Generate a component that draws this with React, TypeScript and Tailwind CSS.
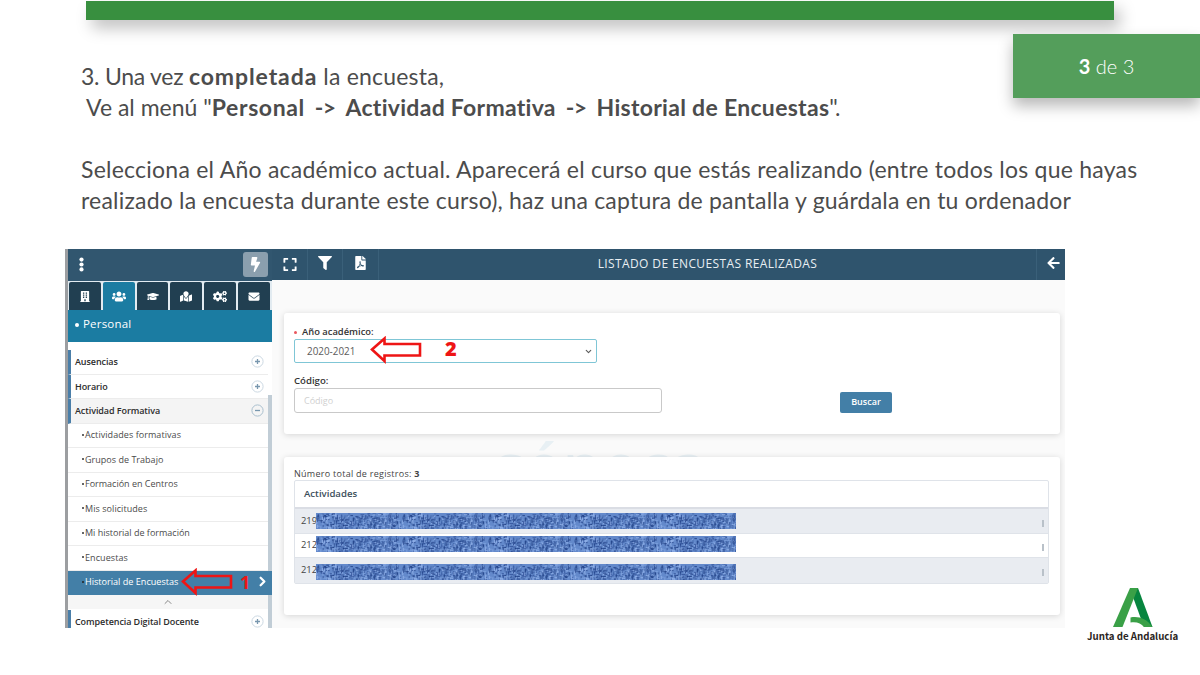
import {
  FaArrowLeft,
  FaBolt,
  FaBuilding,
  FaCogs,
  FaEnvelope,
  FaExpand,
  FaFilePdf,
  FaFilter,
  FaGraduationCap,
  FaMapMarked,
  FaUsers,
} from 'react-icons/fa'
import { ChevronDown, ChevronRight, ChevronUp } from 'lucide-react'

const tabs = [FaBuilding, FaUsers, FaGraduationCap, FaMapMarked, FaCogs, FaEnvelope]

const submenu = [
  { label: 'Actividades formativas', tracking: 'tracking-[0.06px]' },
  { label: 'Grupos de Trabajo', tracking: 'tracking-[0.02px]' },
  { label: 'Formación en Centros', tracking: 'tracking-[0px]' },
  { label: 'Mis solicitudes', tracking: 'tracking-[0.06px]' },
  { label: 'Mi historial de formación', tracking: 'tracking-[0px]' },
  { label: 'Encuestas', tracking: 'tracking-[0.08px]' },
]

const rows = [
  { code: '219', style: 'h-[25px] bg-[#e9ecf1]', bar: 'mt-0' },
  { code: '212', style: 'h-[24px] bg-white', bar: '-mt-[3px]' },
  { code: '212', style: 'h-[25px] bg-[#e9ecf1]', bar: 'mt-[2px]' },
]

// fixed seed so that the three bars share one texture
function makeSpecks() {
  const colors = ['#1f3f85', '#2d4f96', '#4268ac', '#7ea2de', '#94b4ec', '#3a5c9f']
  const specks = []
  let seed = 17
  const next = () => {
    seed = (seed * 16807) % 2147483647
    return seed / 2147483647
  }
  for (let i = 0; i < 420; i++) {
    const tall = next() > 0.5
    specks.push({
      x: next() * 84,
      y: next() * 15,
      w: tall ? 1.2 : 1 + next() * 3,
      h: tall ? 1 + next() * 4 : 1.2,
      fill: colors[Math.floor(next() * colors.length)],
    })
  }
  return specks
}

const specks = makeSpecks()

function Redacted({ id }: { id: string }) {
  return (
    <svg width="420" height="16" className="block">
      <defs>
        <pattern id={id} width="86" height="16" patternUnits="userSpaceOnUse">
          <rect width="86" height="16" fill="#6389cb" />
          {specks.map((s, i) => (
            <rect key={i} x={s.x} y={s.y} width={s.w} height={s.h} fill={s.fill} opacity="0.75" />
          ))}
        </pattern>
      </defs>
      <rect width="420" height="16" fill={`url(#${id})`} />
    </svg>
  )
}

function RedArrow() {
  return (
    <svg width="52" height="28" viewBox="0 0 52 28" fill="none" stroke="#ee1515" strokeWidth="2.6">
      <path d="M2 13.5 L14.5 2.5 V8 H50 V19.5 H14.5 V25 Z" />
    </svg>
  )
}

function Toggle({ open }: { open?: boolean }) {
  return (
    <svg width="13" height="13" viewBox="0 0 13 13" fill="none">
      <circle cx="6.5" cy="6.5" r="5.6" stroke={open ? '#a9bfce' : '#cbd8e2'} />
      <path d={open ? 'M4 6.5h5' : 'M4 6.5h5M6.5 4v5'} stroke="#7897ae" strokeWidth="1.3" />
    </svg>
  )
}

function Section({ label, open }: { label: string; open?: boolean }) {
  return (
    <div
      className={`flex h-[24.5px] shrink-0 items-center justify-between border-b border-l-[3px] border-b-[#ececec] border-l-[#4a7ea8] pl-1 pr-1 ${
        open ? 'bg-[#f4f4f4]' : 'bg-white'
      }`}
    >
      <span className="whitespace-nowrap text-[9px] font-semibold tracking-[-0.08px] text-[#2c2c2c]">{label}</span>
      <Toggle open={open} />
    </div>
  )
}

function Sidebar() {
  return (
    <aside className="flex w-[207px] shrink-0 flex-col border-l-[3px] border-[#9c9ea1] bg-white">
      <div className="flex h-[32px] shrink-0 items-center justify-between bg-[#31566f] pb-[2px] pl-[11px] pr-1">
        <svg width="5" height="15" fill="#fff">
          <circle cx="2.5" cy="2.6" r="2.1" />
          <circle cx="2.5" cy="7.5" r="2.1" />
          <circle cx="2.5" cy="12.4" r="2.1" />
        </svg>
        <div className="flex h-[25px] w-[25px] items-center justify-center rounded-[3px] bg-[#8b9fae]">
          <FaBolt className="h-[15px] w-[11px] text-white" />
        </div>
      </div>
      <div className="flex h-[29px] shrink-0 gap-[2px] bg-[#e2ebf1] pl-px pr-[2px] pt-px">
        {tabs.map((Icon, i) => (
          <div
            key={i}
            className={`flex flex-1 items-center justify-center rounded-t-[2px] ${i === 1 ? 'bg-[#1b7ca2]' : 'bg-[#213f51]'}`}
          >
            <Icon className={i === 1 || i === 4 ? 'h-[13px] w-[14px] text-white' : 'h-[11px] w-[12px] text-white'} />
          </div>
        ))}
      </div>
      <div className="flex h-[32px] shrink-0 items-start gap-1 bg-[#1b7ca2] pl-[7px] pt-[5px] text-white">
        <span className="mt-[8px] h-1 w-1 rounded-full bg-white" />
        <span className="text-[11.5px] leading-[17px] tracking-[0.2px]">Personal</span>
      </div>
      <div className="flex min-h-0 flex-1 pt-2">
        <div className="flex w-[200px] flex-col">
          <Section label="Ausencias" />
          <Section label="Horario" />
          <Section label="Actividad Formativa" open />
          {submenu.map((item) => (
            <div key={item.label} className="flex h-[24.5px] shrink-0 items-center gap-px border-b border-[#ececec] pb-px pl-[14px]">
              <span className="h-[2px] w-[2px] rounded-full bg-[#333]" />
              <span className={`whitespace-nowrap text-[9px] text-[#4b4b4b] ${item.tracking}`}>{item.label}</span>
            </div>
          ))}
          <div className="relative z-10 flex h-[24px] w-[204px] shrink-0 items-center gap-px bg-[#437fa7] pb-[2px] pl-[14px] text-white">
            <span className="h-[2px] w-[2px] shrink-0 rounded-full bg-[#222]" />
            <span className="w-[95px] shrink-0 whitespace-nowrap text-[9.1px] font-medium">Historial de Encuestas</span>
            <div className="shrink-0">
              <RedArrow />
            </div>
            <span className="ml-[6px] text-[18px] font-bold leading-none text-[#ee1515]">1</span>
            <ChevronRight className="ml-[4px] h-[15px] w-[15px] shrink-0" strokeWidth={3.6} />
          </div>
          <div className="flex h-[14px] shrink-0 items-center justify-center bg-[#f6f6f6]">
            <ChevronUp className="h-[12px] w-[12px] text-[#888]" strokeWidth={2} />
          </div>
          <div className="pt-px">
            <Section label="Competencia Digital Docente" />
          </div>
        </div>
        <div className="mt-[45px] w-[4px] bg-[#c1cdd6]" />
      </div>
    </aside>
  )
}

function Toolbar() {
  return (
    <div className="flex h-[31px] shrink-0 items-stretch bg-[#2f546d] text-white">
      <div className="flex w-[36px] items-center justify-center border-r border-[#3a6079]">
        <FaExpand className="h-[15px] w-[14px]" />
      </div>
      <div className="flex w-[35px] items-center justify-center border-r border-[#3a6079]">
        <FaFilter className="mb-[4px] h-[14px] w-[14px]" />
      </div>
      <div className="flex w-[36px] items-center justify-center border-r border-[#3a6079]">
        <FaFilePdf className="mb-[4px] h-[14px] w-[11px]" />
      </div>
      <div className="flex flex-1 items-center justify-center whitespace-nowrap pb-px text-[12px] font-medium tracking-[0.38px] text-[#e9eff3]">
        LISTADO DE ENCUESTAS REALIZADAS
      </div>
      <div className="flex w-[29px] items-center justify-center border-l border-[#3a6079] pl-1">
        <FaArrowLeft className="mb-[4px] h-[14px] w-[13px]" />
      </div>
    </div>
  )
}

function SearchCard() {
  return (
    <section className="relative h-[121px] shrink-0 rounded-[3px] bg-white px-[10px] pt-3 text-[9px] shadow-[0_1px_6px_rgba(0,0,0,0.15)]">
      <label className="flex h-[14px] items-center gap-[5px] text-[9.4px] font-semibold text-[#333]">
        <span className="h-[3px] w-[3px] rounded-full bg-[#e9565d]" />
        Año académico:
      </label>
      <div className="flex h-[24px] w-[303px] items-center rounded-[2px] border border-[#7fc6d6] pl-3 pr-[3px] text-[#5c5c5c]">
        <span className="w-[49px] whitespace-nowrap text-[9.9px]">2020-2021</span>
        <div className="-mt-[2px] ml-[14px]">
          <RedArrow />
        </div>
        <span className="-mt-1 ml-[23px] text-[20px] font-extrabold leading-none text-[#ee1515]">2</span>
        <ChevronDown className="ml-auto h-[9px] w-[9px]" strokeWidth={3} />
      </div>
      <div className="flex items-end">
        <div className="w-[368px] pt-[12px]">
          <label className="flex h-[13px] items-center text-[9.6px] font-semibold text-[#333]">Código:</label>
          <div className="flex h-[25px] items-center rounded-[3px] border border-[#c9c9c9] pl-[9px] text-[#d0d0d0]">Código</div>
        </div>
        <button className="ml-[178px] h-[21px] w-[52px] rounded-[2px] bg-[#437fa7] pb-px text-[9px] font-semibold text-white">
          Buscar
        </button>
      </div>
    </section>
  )
}

function ResultsCard() {
  return (
    <section className="relative mt-[23px] h-[158px] shrink-0 rounded-[3px] bg-white pl-[10px] pr-[11px] pt-[10px] text-[9px] text-[#444] shadow-[0_1px_6px_rgba(0,0,0,0.15)]">
      <div className="h-[13px] whitespace-nowrap leading-[13px] tracking-[0.27px]">
        Número total de registros: <b>3</b>
      </div>
      <div className="rounded-[2px] border border-[#dfe3e9]">
        <div className="flex h-[28px] items-center border-b-2 border-[#dadde4] pl-[9px] text-[9.6px] font-semibold text-[#3b4e5a]">
          Actividades
        </div>
        {rows.map((row, i) => (
          <div key={i} className={`flex items-center border-b border-[#dfe3e9] pl-[6px] pr-1 last:border-b-0 ${row.style}`}>
            <span className="w-[15px] text-[9.4px]">{row.code}</span>
            <div className={`relative ${row.bar}`}>
              <Redacted id={`noise-${i}`} />
            </div>
            <span className="ml-auto mt-1 h-[7px] w-[2px] bg-[#b9c1c9]" />
          </div>
        ))}
      </div>
    </section>
  )
}

function Logo() {
  return (
    <div className="flex flex-col items-center">
      <svg width="40" height="40" viewBox="0 0 40 40">
        <path d="M17 0 H25 L39.5 39 H31 L17 1 Z" fill="#07853f" />
        <path d="M17 0 H25 L9.5 39 H0 Z" fill="#3aa047" />
        <path d="M17.5 29.5 C25 28 33 30 39.5 39 H31 C28 35 23.5 33.6 17.5 34.5 Z" fill="#3aa047" />
      </svg>
      <span className="mt-[2px] whitespace-nowrap font-['Noto_Sans_CJK_SC',sans-serif] text-[9.7px] font-bold leading-[13px] text-[#2b2523]">
        Junta de Andalucía
      </span>
    </div>
  )
}

export default function App() {
  return (
    <div className="relative flex h-[675px] w-[1200px] flex-col overflow-hidden bg-white font-['Open_Sans','Noto_Sans',sans-serif]">
      <div className="ml-[86px] mt-px h-[19px] w-[1028px] shrink-0 bg-[#388f3f] shadow-[6px_8px_16px_rgba(0,0,0,0.25)]" />

      <div className="absolute right-0 top-[34px] flex h-[64px] w-[187px] items-center justify-center bg-[#549e5b] pb-px font-['Lato',sans-serif] text-[20px] font-light text-white shadow-[0_8px_14px_rgba(0,0,0,0.28)]">
        <span className="whitespace-pre">
          <b className="font-bold">3</b> de 3
        </span>
      </div>

      <div className="ml-[81px] mt-[41px] h-[188px] whitespace-pre font-['Lato',sans-serif] text-[23px] leading-[31px] text-[#4c4c4c]">
        <p>
          <span className="tracking-[-0.26px]">3. Una vez </span>
          <b className="tracking-[0.9px]">completada</b>
          <span className="tracking-[0.2px]"> la encuesta,</span>
        </p>
        <p>
          {' '}Ve al menú "<b className="tracking-[0.6px]">Personal</b>
          <b className="tracking-[-0.6px]">{'  ->  '}</b>
          <b className="tracking-[0.28px]">Actividad Formativa</b>
          <b className="tracking-[-0.6px]">{'  ->  '}</b>
          <b className="tracking-[0.3px]">Historial de Encuestas</b>
          <span className="tracking-[-0.6px]">".</span>
        </p>
        <p>&nbsp;</p>
        <p className="tracking-[0.24px]">Selecciona el Año académico actual. Aparecerá el curso que estás realizando (entre todos los que hayas</p>
        <p className="tracking-[0.2px]">realizado la encuesta durante este curso), haz una captura de pantalla y guárdala en tu ordenador</p>
      </div>

      <div className="ml-[65px] flex h-[379px] w-[1000px] shrink-0 overflow-hidden">
        <Sidebar />
        <main className="flex flex-1 flex-col bg-[#fafafa]">
          <Toolbar />
          <div className="relative flex flex-col pl-3 pr-[5px] pt-[33px]">
            <span className="absolute left-[223px] top-[146px] text-[60px] font-semibold leading-[76px] tracking-[2px] text-[#e8f0f4]">séneca</span>
            <SearchCard />
            <ResultsCard />
          </div>
        </main>
      </div>

      <div className="absolute left-[1087px] top-[588px]">
        <Logo />
      </div>
    </div>
  )
}
